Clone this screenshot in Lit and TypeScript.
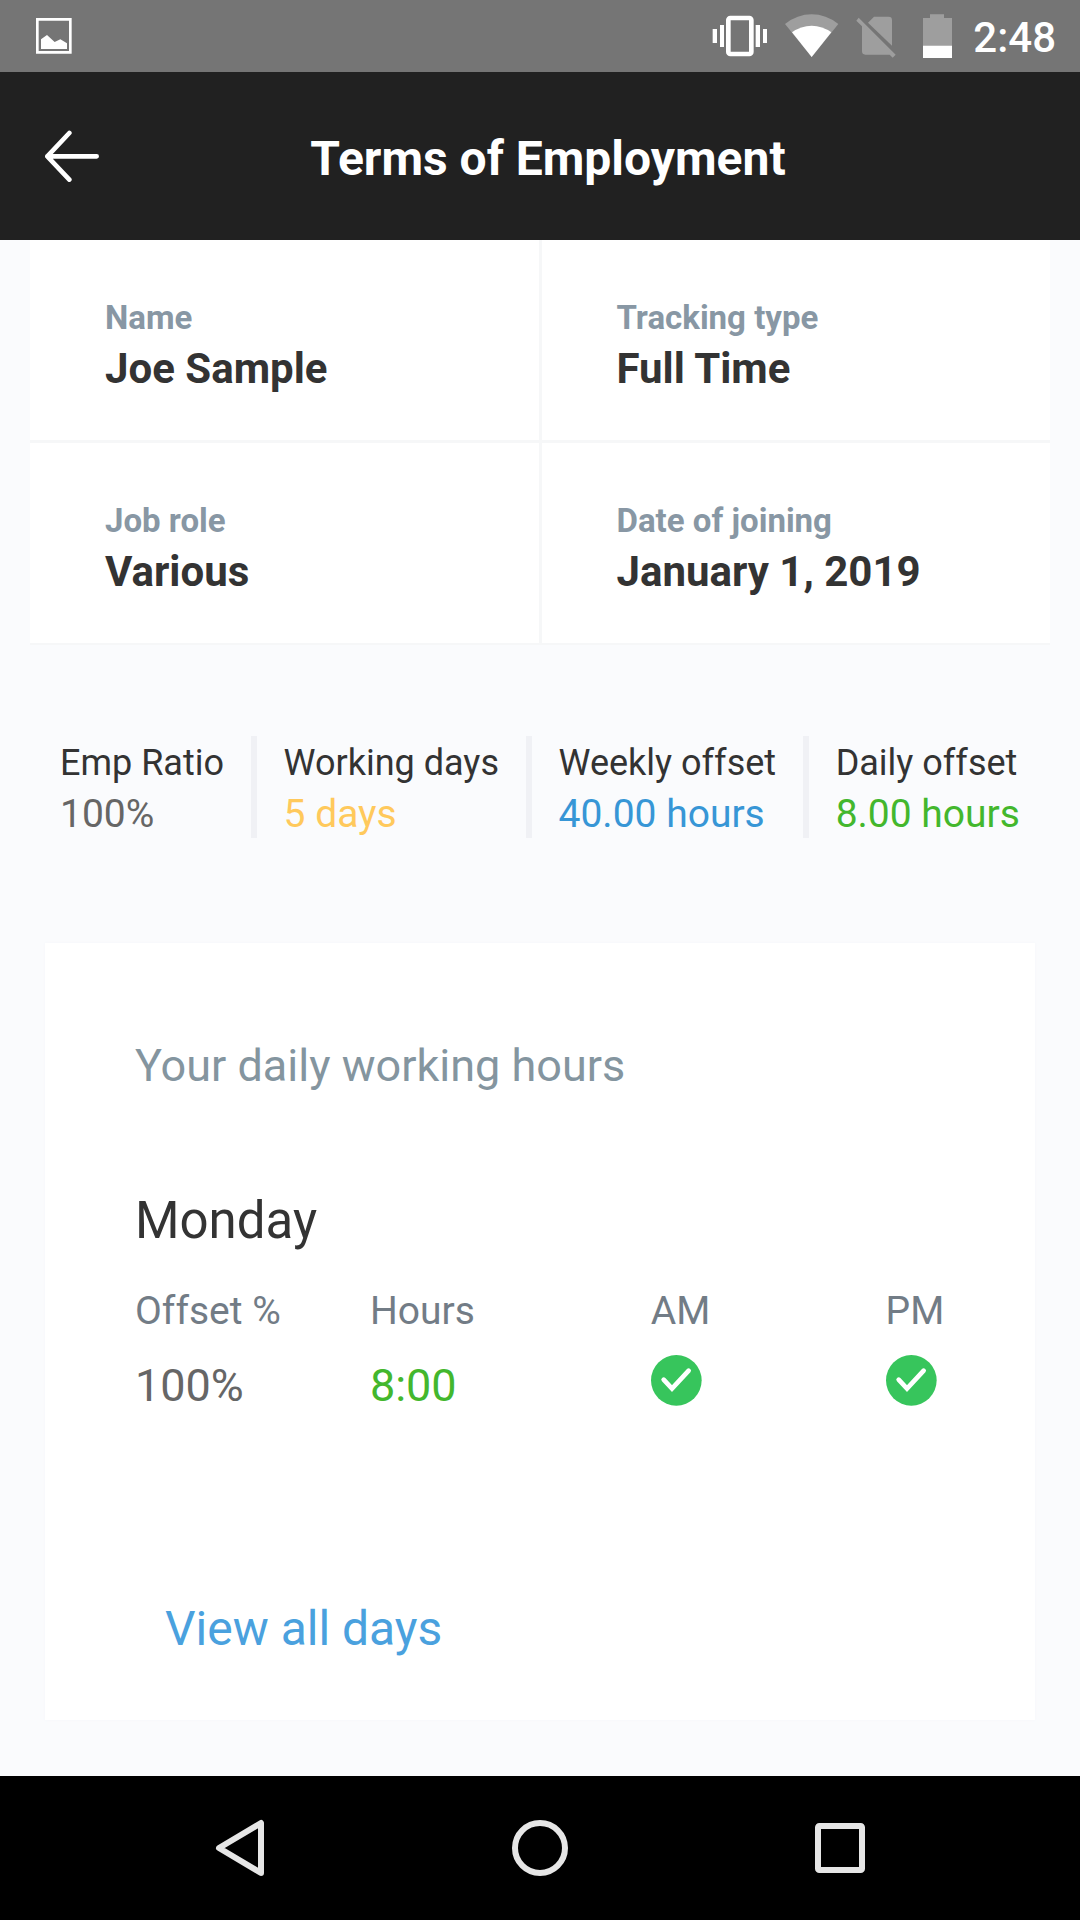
import { LitElement, html, css, svg } from "lit";
import { customElement } from "lit/decorators.js";
import { classMap } from "lit/directives/class-map.js";

interface Fact {
  label: string;
  value: string;
}

interface Stat extends Fact {
  tone: "plain" | "amber" | "blue" | "green";
}

const facts: Fact[] = [
  { label: "Name", value: "Joe Sample" },
  { label: "Tracking type", value: "Full Time" },
  { label: "Job role", value: "Various" },
  { label: "Date of joining", value: "January 1, 2019" },
];

const stats: Stat[] = [
  { label: "Emp Ratio", value: "100%", tone: "plain" },
  { label: "Working days", value: "5 days", tone: "amber" },
  { label: "Weekly offset", value: "40.00 hours", tone: "blue" },
  { label: "Daily offset", value: "8.00 hours", tone: "green" },
];

@customElement("status-bar")
export class StatusBar extends LitElement {
  static styles = css`
    :host {
      display: flex;
      align-items: center;
      justify-content: space-between;
      height: 72px;
      padding: 0 24px 0 36px;
      background: #757575;
      color: #fff;
      font-family: Roboto, "Liberation Sans", sans-serif;
    }
    svg {
      display: block;
      overflow: visible;
    }
    .right {
      display: flex;
      align-items: center;
      gap: 18px;
    }
    .time {
      font-size: 42px;
      line-height: 50px;
      font-weight: 500;
      padding: 4px 0 0 1px;
    }
  `;

  render() {
    return html`
      <svg width="36" height="36" viewBox="0 0 108 108" aria-hidden="true">
        <path
          fill="#fff"
          fill-rule="evenodd"
          d="M0 0H107V107H0ZM8 8V99H99V8Z"
        />
        <path fill="#fff" d="M15 93V64L33 51L56 72L73 64L93 76V93Z" />
      </svg>
      <div class="right">
        <svg width="55" height="44" viewBox="66 42 165 132" aria-hidden="true">
          <rect x="115" y="54" width="69" height="108" rx="6" fill="none" stroke="#fff" stroke-width="14" />
          <path
            fill="#fff"
            d="M90 75h12v66H90zM68 87h13v42H68zM197 75h13v66h-13zM219 87h12v42h-12z"
          />
        </svg>
        <svg width="53" height="44" viewBox="285 42 159 132" aria-hidden="true">
          <path fill="#9e9e9e" d="M365 171L285 72Q322 43 365 43T445 72Z" />
          <path fill="#fff" d="M365 171L306 97Q333 77 365 77T424 97Z" />
        </svg>
        <svg width="48" height="44" viewBox="498 42 144 132" aria-hidden="true">
          <path fill="#9e9e9e" d="M534 68L552 50H596Q606 50 606 60V137Z" />
          <path
            fill="#9e9e9e"
            d="M506 53L617 164L608 173L599 164H526Q516 164 516 154V79L499 62Z"
          />
        </svg>
        <svg width="32" height="44" viewBox="696 42 96 132" aria-hidden="true">
          <path fill="#9e9e9e" d="M720 43h42v11h24v83h-87V54h21z" />
          <path fill="#fff" d="M699 137h87v37h-87z" />
        </svg>
        <span class="time">2:48</span>
      </div>
    `;
  }
}

@customElement("app-header")
export class AppHeader extends LitElement {
  static styles = css`
    :host {
      display: flex;
      align-items: center;
      height: 168px;
      padding: 0 83px 0 45px;
      box-sizing: border-box;
      background: #212121;
      color: #fff;
      font-family: Roboto, "Liberation Sans", sans-serif;
    }
    .back {
      border: 0;
      padding: 0;
      background: none;
      cursor: pointer;
    }
    svg {
      display: block;
    }
    .title {
      flex: 1;
      margin: 0;
      padding-top: 5px;
      text-align: center;
      font-size: 48px;
      line-height: 56px;
      font-weight: 700;
    }
  `;

  render() {
    return html`
      <button class="back" aria-label="Back">
        <svg width="54" height="52" viewBox="0 0 162 156">
          <path
            d="M73 9L7 79L73 149M7 79H155"
            fill="none"
            stroke="#fff"
            stroke-width="14"
            stroke-linecap="round"
            stroke-linejoin="round"
          />
        </svg>
      </button>
      <h1 class="title">Terms of Employment</h1>
    `;
  }
}

@customElement("working-hours")
export class WorkingHours extends LitElement {
  static styles = css`
    :host {
      display: block;
      padding: 96px 0 63px 90px;
      background: #fff;
      box-shadow: 0 0 3px #f5f7fa;
      font-family: Roboto, "Liberation Sans", sans-serif;
    }
    .heading {
      margin: 0;
      font-size: 45px;
      line-height: 54px;
      font-weight: 400;
      color: #84959f;
    }
    .day {
      margin: 98px 0 36px;
      font-size: 51px;
      line-height: 60px;
      font-weight: 400;
      color: #333;
    }
    .hours {
      width: 100%;
      table-layout: fixed;
      border-collapse: collapse;
    }
    .wide {
      width: 31.2%;
    }
    .narrow {
      width: 26.1%;
    }
    th {
      padding: 0;
      text-align: left;
      font-size: 39px;
      line-height: 48px;
      font-weight: 400;
      color: #727c86;
    }
    td {
      padding: 24px 0 0;
      vertical-align: top;
      font-size: 45px;
      line-height: 54px;
      color: #666;
    }
    td.total {
      color: #43b72d;
    }
    td.mark {
      padding-top: 20px;
    }
    svg {
      display: block;
    }
    .all {
      display: inline-block;
      margin: 188px 0 0 30px;
      font-size: 48px;
      line-height: 56px;
      color: #4aa1de;
      text-decoration: none;
    }
  `;

  private check(label: string) {
    return html`
      <svg width="51" height="51" viewBox="0 0 153 153" role="img" aria-label=${label}>
        ${svg`
          <circle cx="76" cy="76" r="76" fill="#37c55c" />
          <path d="M38 74L63 101L113 47" fill="none" stroke="#fff" stroke-width="14" stroke-linecap="round" />
        `}
      </svg>
    `;
  }

  render() {
    return html`
      <h2 class="heading">Your daily working hours</h2>
      <h3 class="day">Monday</h3>
      <table class="hours">
        <thead>
          <tr>
            <th class="narrow" scope="col">Offset %</th>
            <th class="wide" scope="col">Hours</th>
            <th class="narrow" scope="col">AM</th>
            <th scope="col">PM</th>
          </tr>
        </thead>
        <tbody>
          <tr>
            <td>100%</td>
            <td class="total">8:00</td>
            <td class="mark">${this.check("Working")}</td>
            <td class="mark">${this.check("Working")}</td>
          </tr>
        </tbody>
      </table>
      <a class="all" href="#days">View all days</a>
    `;
  }
}

@customElement("nav-bar")
export class NavBar extends LitElement {
  static styles = css`
    :host {
      display: flex;
      height: 144px;
      padding: 0 90px;
      box-sizing: border-box;
      background: #000;
    }
    .key {
      flex: 1;
      display: flex;
      align-items: center;
      justify-content: center;
      border: 0;
      padding: 0;
      background: none;
      cursor: pointer;
    }
    .key path,
    .key circle,
    .key rect {
      fill: none;
      stroke: #e6e6e6;
      stroke-width: 18;
      stroke-linejoin: round;
    }
  `;

  render() {
    return html`
      <button class="key" aria-label="Back">
        <svg width="60" height="60" viewBox="0 0 180 180">
          <path d="M27 90L153 15V165Z" />
        </svg>
      </button>
      <button class="key" aria-label="Home">
        <svg width="60" height="60" viewBox="0 0 180 180">
          <circle cx="90" cy="90" r="75" />
        </svg>
      </button>
      <button class="key" aria-label="Recent apps">
        <svg width="60" height="60" viewBox="0 0 180 180">
          <rect x="24" y="24" width="132" height="132" rx="4" />
        </svg>
      </button>
    `;
  }
}

@customElement("app-root")
export class AppRoot extends LitElement {
  static styles = css`
    :host {
      display: flex;
      flex-direction: column;
      min-height: 100vh;
      background: #fafbfd;
      font-family: Roboto, "Liberation Sans", sans-serif;
    }
    .content {
      flex: 1;
      padding-bottom: 56px;
    }
    .facts {
      display: grid;
      grid-template-columns: 1fr 1fr;
      gap: 3px;
      margin: 0 30px;
      background: #f6f7f8;
      border-bottom: 2px solid #f6f7f8;
    }
    .fact {
      display: flex;
      flex-direction: column;
      gap: 4px;
      height: 200px;
      box-sizing: border-box;
      padding: 58px 0 0 75px;
      background: #fff;
    }
    dl,
    dt,
    dd {
      margin: 0;
    }
    .fact dt {
      font-size: 33px;
      line-height: 40px;
      font-weight: 700;
      color: #8897a4;
    }
    .fact dd {
      font-size: 42px;
      line-height: 54px;
      font-weight: 700;
      color: #333;
    }
    .stats {
      display: flex;
      justify-content: space-between;
      padding: 91px 60px 105px;
    }
    .stat {
      display: flex;
      flex-direction: column;
      gap: 3px;
      padding-top: 3px;
      white-space: nowrap;
    }
    .stat dt {
      font-size: 36px;
      line-height: 48px;
      color: #333;
    }
    .stat dd {
      font-size: 39px;
      line-height: 48px;
      color: #666;
    }
    .stat.amber dd {
      color: #ffc95c;
    }
    .stat.blue dd {
      color: #3796d6;
    }
    .stat.green dd {
      color: #43b72d;
    }
    .rule {
      width: 6px;
      background: #f0f1f5;
    }
    .card {
      margin: 0 45px;
    }
  `;

  render() {
    return html`
      <status-bar></status-bar>
      <app-header></app-header>
      <main class="content">
        <dl class="facts">
          ${facts.map(
            (f) => html`<div class="fact"><dt>${f.label}</dt><dd>${f.value}</dd></div>`
          )}
        </dl>
        <dl class="stats">
          ${stats.map(
            (s, i) => html`
              ${i > 0 ? html`<div class="rule" role="presentation"></div>` : ""}
              <div class=${classMap({ stat: true, [s.tone]: true })}>
                <dt>${s.label}</dt>
                <dd>${s.value}</dd>
              </div>
            `
          )}
        </dl>
        <working-hours class="card"></working-hours>
      </main>
      <nav-bar></nav-bar>
    `;
  }
}
